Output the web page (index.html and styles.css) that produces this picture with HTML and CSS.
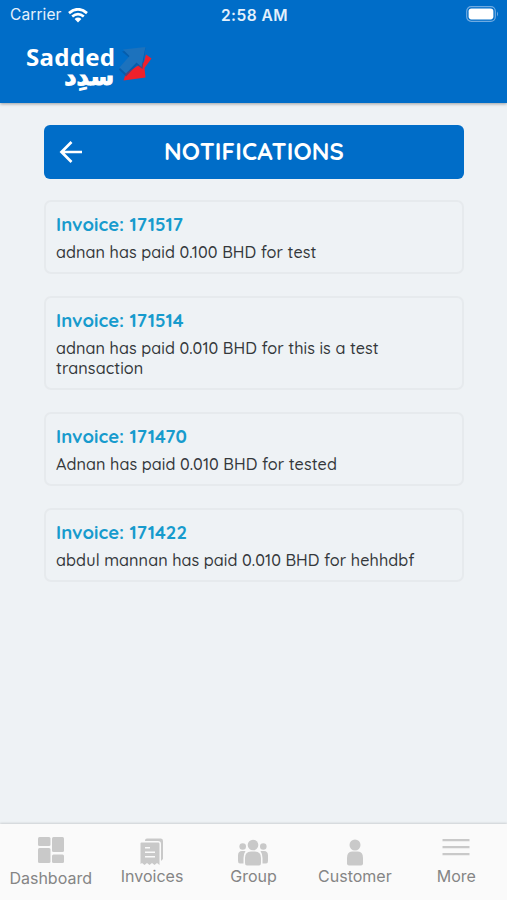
FILE: index.html
```html
<!DOCTYPE html>
<html lang="en">
<head>
<meta charset="utf-8">
<title>Notifications</title>
<link rel="stylesheet" href="styles.css">
</head>
<body>
<div class="app">
  <header class="top">
    <div class="status">
      <div class="carrier"><span>Carrier</span>
        <svg width="20" height="15" viewBox="0 0 20 15" fill="none" stroke="#fff" stroke-width="2.7"><path d="M1 5.1Q10-2.6 19 5.1M4.2 8.5Q10 3.7 15.8 8.5"/><path d="M6.6 10.9Q10 8 13.4 10.9L10 14.4Z" fill="#fff" stroke="none"/></svg>
      </div>
      <span class="time">2:58 AM</span>
      <svg class="battery" width="33" height="16" viewBox="0 0 33 16"><rect x=".7" y=".7" width="28.6" height="14.6" rx="4.5" fill="none" stroke="#70abe1" stroke-width="1.2"/><rect x="2.6" y="2.6" width="24.8" height="10.8" rx="2.8" fill="#fff"/><path d="M31 5.5q2 2.5 0 5z" fill="#70abe1"/></svg>
    </div>
    <div class="brand">
      <div class="words"><span class="latin">Sadded</span><span class="arabic" lang="ar" dir="rtl">سدِد</span></div>
      <svg class="mark" width="38" height="42" viewBox="0 0 38 42"><path d="M28 12.5L33.5 16.5L26.5 26L27.5 35.5L5.5 38.5L8 31L26 20Z" fill="#f0202b"/><path d="M4 9.500L27.500 5.500L24.500 27L19 23L8 34.500L.8 27.500L11 15.500Z" fill="#07549c" opacity=".65"/><path d="M5 7.500L27.500 5L23.500 25L18.500 20.500L8 31.500L1.500 25.500L11.500 14Z" fill="#1c72bd"/></svg>
    </div>
  </header>
  <main>
    <div class="title">
      <svg width="24" height="24" viewBox="0 0 24 24" fill="none" stroke="#fff" stroke-width="2.7"><path d="M23 12H2M12.500 2L2.500 12L12.500 22"/></svg>
      <h1>NOTIFICATIONS</h1>
    </div>
    <article><h2>Invoice: 171517</h2><p>adnan has paid 0.100 BHD for test</p></article>
    <article><h2>Invoice: 171514</h2><p>adnan has paid 0.010 BHD for this is a test<br>transaction</p></article>
    <article><h2>Invoice: 171470</h2><p>Adnan has paid 0.010 BHD for tested</p></article>
    <article><h2>Invoice: 171422</h2><p>abdul mannan has paid 0.010 BHD for hehhdbf</p></article>
  </main>
  <nav>
    <a class="dash"><svg width="28" height="28" viewBox="0 0 28 28"><rect x="1" y="1" width="12.500" height="9" rx="1.500"/><rect x="15" y="1" width="12" height="15" rx="1.500"/><rect x="1" y="12" width="12.500" height="15" rx="1.500"/><rect x="15" y="18.500" width="12" height="8.500" rx="1.500"/></svg><span>Dashboard</span></a>
    <a><svg width="28" height="28" viewBox="0 0 28 28"><path d="M7 2.500Q7 .5 9 .5H23Q25 .5 25 3V21L23 23V6Q23 3 20 3H7Z"/><path fill-rule="evenodd" d="M3.500 4.500H20.500Q21.500 4.500 21.500 6V27L19 25L16.500 27L14 25L11.500 27L9 25L6.500 27L4 25L2.500 26V5.500Q2.500 4.500 3.500 4.500ZM7 9H12V10.500H7ZM7 13.500H17V15H7ZM7 18H17V19.500H7Z"/></svg><span>Invoices</span></a>
    <a><svg width="32" height="28" viewBox="0 0 32 28"><circle cx="16" cy="7" r="5.300"/><circle cx="5.700" cy="8.500" r="3.300"/><circle cx="26.300" cy="8.500" r="3.300"/><path d="M8 25V20Q8 13.500 14 13.500H18Q24 13.500 24 20V25Q24 27.500 22 27.500H10Q8 27.500 8 25ZM1 23V17.500Q1 13 5 13H8.500Q6.500 16 6.500 20V25.500H3Q1 25.500 1 23ZM31 23V17.500Q31 13 27 13H23.500Q25.500 16 25.500 20V25.500H29Q31 25.500 31 23Z"/></svg><span>Group</span></a>
    <a><svg width="20" height="28" viewBox="0 0 20 28"><circle cx="10" cy="7" r="5.500"/><path d="M2 25.500V20Q2 13.500 7 13.500H13Q18 13.500 18 20V25.500Q18 27.500 16 27.500H4Q2 27.500 2 25.500Z"/></svg><span>Customer</span></a>
    <a><svg width="28" height="28" viewBox="0 0 28 28"><path d="M.5 1H27.500V3.200H.5ZM.5 8H27.500V10.200H.5ZM.5 15H27.500V17.200H.5Z"/></svg><span>More</span></a>
  </nav>
</div>
</body>
</html>
```
FILE: styles.css
```css
* { box-sizing: border-box; }
body { margin: 0; background: #eef2f5; }
h1, h2, p { margin: 0; }
svg { display: block; flex: none; }
.app { height: 900px; display: flex; flex-direction: column; font-family: Quicksand, Lato, sans-serif; }
.top { height: 103px; background: #006dc8; box-shadow: 0 1px 3px rgba(0,0,0,.35); flex: none; }
.status { height: 30px; display: grid; grid-template-columns: 1fr auto 1fr; align-items: center; padding: 0 8px 0 10px; color: #e4f1fc; font: 15.5px/28px Inter, sans-serif; }
.carrier { display: flex; align-items: center; gap: 6px; }
.carrier span { letter-spacing: .1px; }
.time { font-weight: 600; font-size: 15.5px; letter-spacing: .5px; transform: translateY(1px); }
.battery { justify-self: end; margin-top: -2px; }
.brand { display: flex; padding: 12px 0 0 26px; }
.words { width: 90px; display: flex; flex-direction: column; color: #fff; }
.latin { font: 700 24px/30px "Noto Sans", sans-serif; letter-spacing: .3px; }
.arabic { font: 700 24px/22px "DejaVu Sans", sans-serif; margin-top: -6px; padding-right: 2px; -webkit-text-stroke: 1px #fff; }
.mark { margin-left: 2px; }
main { flex: 1; padding: 22px 43px 0 44px; }
.title { height: 54px; border-radius: 6px; background: #006dc8; display: grid; grid-template-columns: 24px 1fr 24px; align-items: center; padding: 0 15px; margin-bottom: 21px; }
h1 { text-align: center; color: #fff; font-size: 24px; line-height: 30px; font-weight: 700; letter-spacing: .15px; padding-bottom: 2px; }
article { border: 2px solid #e6eaed; border-radius: 7px; padding: 9px 10px 10px; margin-bottom: 22px; }
h2 { color: #179bcd; font-size: 18.5px; line-height: 26px; font-weight: 700; letter-spacing: .05px; }
p { color: #34383b; font-size: 16.2px; line-height: 20px; padding-top: 5px; white-space: nowrap; font-weight: 500; letter-spacing: .07px; }
nav { height: 76px; flex: none; background: #fafafa; box-shadow: 0 -1px 2px rgba(0,0,0,.14); display: grid; grid-template-columns: repeat(5, 1fr); color: #858585; font: 16px/20px Inter, sans-serif; }
nav a { display: flex; flex-direction: column; align-items: center; padding-top: 14px; }
nav a.dash { padding-top: 12px; }
nav .dash span { margin-top: 4px; }
nav svg { fill: #c9c9c9; }
```
